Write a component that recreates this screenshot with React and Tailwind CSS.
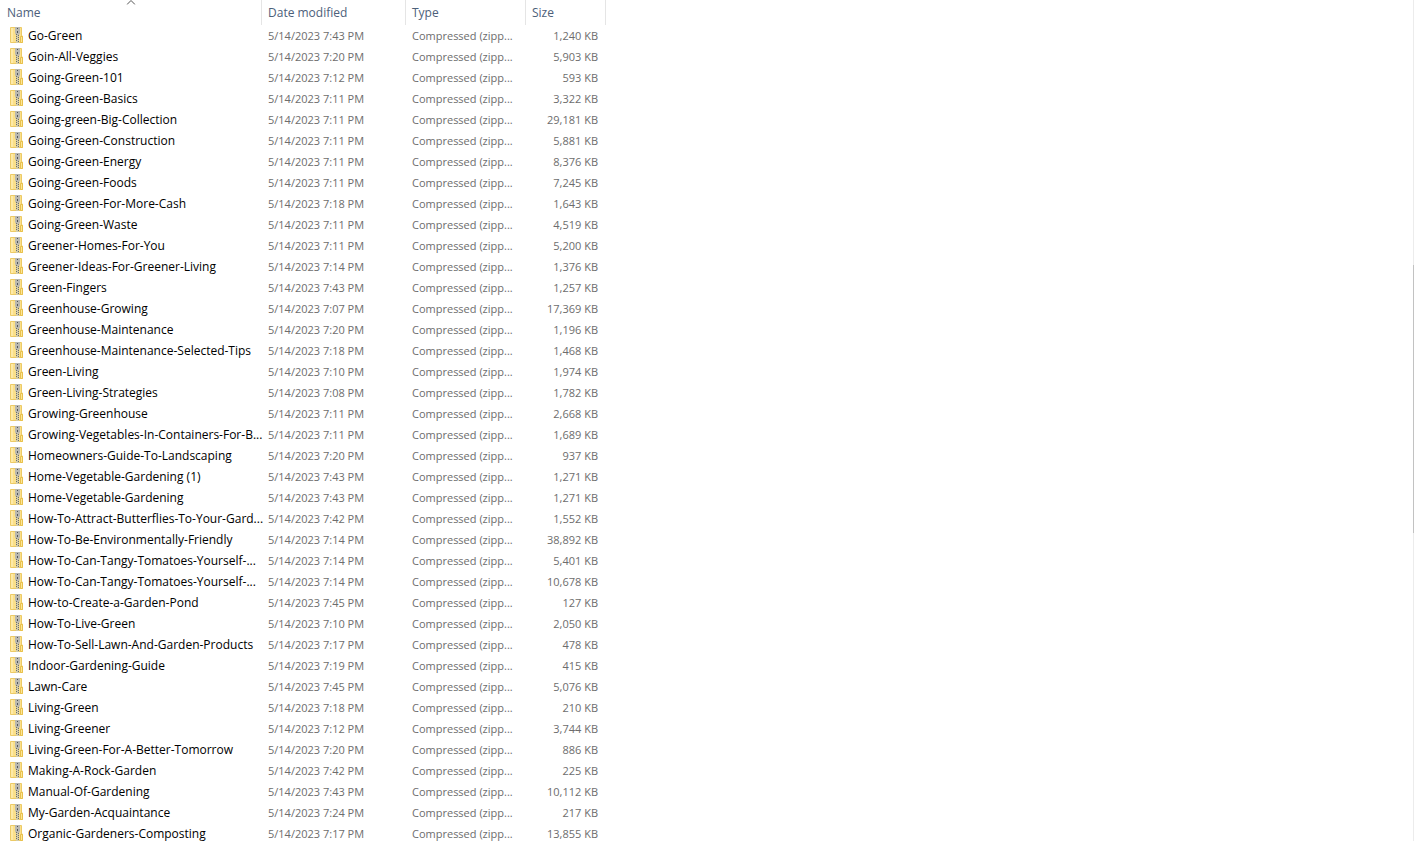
import { useState } from 'react';

const files = [
    { name: 'Go-Green', modified: '5/14/2023 7:43 PM', size: '1,240 KB' },
    { name: 'Goin-All-Veggies', modified: '5/14/2023 7:20 PM', size: '5,903 KB' },
    { name: 'Going-Green-101', modified: '5/14/2023 7:12 PM', size: '593 KB' },
    { name: 'Going-Green-Basics', modified: '5/14/2023 7:11 PM', size: '3,322 KB' },
    { name: 'Going-green-Big-Collection', modified: '5/14/2023 7:11 PM', size: '29,181 KB' },
    { name: 'Going-Green-Construction', modified: '5/14/2023 7:11 PM', size: '5,881 KB' },
    { name: 'Going-Green-Energy', modified: '5/14/2023 7:11 PM', size: '8,376 KB' },
    { name: 'Going-Green-Foods', modified: '5/14/2023 7:11 PM', size: '7,245 KB' },
    { name: 'Going-Green-For-More-Cash', modified: '5/14/2023 7:18 PM', size: '1,643 KB' },
    { name: 'Going-Green-Waste', modified: '5/14/2023 7:11 PM', size: '4,519 KB' },
    { name: 'Greener-Homes-For-You', modified: '5/14/2023 7:11 PM', size: '5,200 KB' },
    { name: 'Greener-Ideas-For-Greener-Living', modified: '5/14/2023 7:14 PM', size: '1,376 KB' },
    { name: 'Green-Fingers', modified: '5/14/2023 7:43 PM', size: '1,257 KB' },
    { name: 'Greenhouse-Growing', modified: '5/14/2023 7:07 PM', size: '17,369 KB' },
    { name: 'Greenhouse-Maintenance', modified: '5/14/2023 7:20 PM', size: '1,196 KB' },
    { name: 'Greenhouse-Maintenance-Selected-Tips', modified: '5/14/2023 7:18 PM', size: '1,468 KB' },
    { name: 'Green-Living', modified: '5/14/2023 7:10 PM', size: '1,974 KB' },
    { name: 'Green-Living-Strategies', modified: '5/14/2023 7:08 PM', size: '1,782 KB' },
    { name: 'Growing-Greenhouse', modified: '5/14/2023 7:11 PM', size: '2,668 KB' },
    { name: 'Growing-Vegetables-In-Containers-For-B...', modified: '5/14/2023 7:11 PM', size: '1,689 KB' },
    { name: 'Homeowners-Guide-To-Landscaping', modified: '5/14/2023 7:20 PM', size: '937 KB' },
    { name: 'Home-Vegetable-Gardening (1)', modified: '5/14/2023 7:43 PM', size: '1,271 KB' },
    { name: 'Home-Vegetable-Gardening', modified: '5/14/2023 7:43 PM', size: '1,271 KB' },
    { name: 'How-To-Attract-Butterflies-To-Your-Gard...', modified: '5/14/2023 7:42 PM', size: '1,552 KB' },
    { name: 'How-To-Be-Environmentally-Friendly', modified: '5/14/2023 7:14 PM', size: '38,892 KB' },
    { name: 'How-To-Can-Tangy-Tomatoes-Yourself-...', modified: '5/14/2023 7:14 PM', size: '5,401 KB' },
    { name: 'How-To-Can-Tangy-Tomatoes-Yourself-...', modified: '5/14/2023 7:14 PM', size: '10,678 KB' },
    { name: 'How-to-Create-a-Garden-Pond', modified: '5/14/2023 7:45 PM', size: '127 KB' },
    { name: 'How-To-Live-Green', modified: '5/14/2023 7:10 PM', size: '2,050 KB' },
    { name: 'How-To-Sell-Lawn-And-Garden-Products', modified: '5/14/2023 7:17 PM', size: '478 KB' },
    { name: 'Indoor-Gardening-Guide', modified: '5/14/2023 7:19 PM', size: '415 KB' },
    { name: 'Lawn-Care', modified: '5/14/2023 7:45 PM', size: '5,076 KB' },
    { name: 'Living-Green', modified: '5/14/2023 7:18 PM', size: '210 KB' },
    { name: 'Living-Greener', modified: '5/14/2023 7:12 PM', size: '3,744 KB' },
    { name: 'Living-Green-For-A-Better-Tomorrow', modified: '5/14/2023 7:20 PM', size: '886 KB' },
    { name: 'Making-A-Rock-Garden', modified: '5/14/2023 7:42 PM', size: '225 KB' },
    { name: 'Manual-Of-Gardening', modified: '5/14/2023 7:43 PM', size: '10,112 KB' },
    { name: 'My-Garden-Acquaintance', modified: '5/14/2023 7:24 PM', size: '217 KB' },
    { name: 'Organic-Gardeners-Composting', modified: '5/14/2023 7:17 PM', size: '13,855 KB' },
];

const columns = [
    { label: 'Name', width: 'w-[262px]', padding: 'pl-[7px]' },
    { label: 'Date modified', width: 'w-36', padding: 'pl-1.5' },
    { label: 'Type', width: 'w-[120px]', padding: 'pl-1.5' },
    { label: 'Size', width: 'w-20', padding: 'pl-1.5' },
];

const ZipIcon = () => (
    <svg className="w-[13px] h-4 mb-px shrink-0" viewBox="0 0 13 16" aria-hidden="true">
        <path d="M0.5 0.5H11.5V9H12.5V15.5H0.5Z" fill="#fbe08a" stroke="#ecca66" />
        <path d="M1 1H3V15H1Z" fill="#fdeaa8" />
        <path d="M10.5 9.5H12.5V15.5H10.5Z" fill="#fde694" stroke="#e8c04d" />
        <path d="M5 0H10V6L9 8H6L5 6Z" fill="#b9b8b0" />
        <path d="M6 8H9V16H6Z" fill="#d3cba6" />
        <path d="M7 1H8V2H7ZM7 4H8V6H7Z" fill="#4f5358" />
        <path
            d="M6 7H7V8H6ZM8 8H9V9H8ZM6 9H7V10H6ZM8 10H9V11H8ZM6 11H7V12H6ZM8 12H9V13H8ZM6 13H7V14H6ZM8 14H9V15H8Z"
            fill="#6c6f70"
        />
    </svg>
);

const SortArrow = ({ descending }) => (
    <svg
        className={`absolute top-0 left-1/2 -translate-x-1/2 w-[9px] h-[5px] ${descending ? 'rotate-180' : ''}`}
        viewBox="0 0 9 5"
        aria-hidden="true"
    >
        <path d="M0.5 4.5L4.5 0.5L8.5 4.5" fill="none" stroke="#555555" />
    </svg>
);

const FileTable = () => {
    const [descending, setDescending] = useState(false);
    const rows = descending ? [...files].reverse() : files;

    return (
        <table className="table-fixed w-[606px] border-separate border-spacing-0 text-xs leading-4">
            <thead>
                <tr>
                    {columns.map((col) => (
                        <th
                            key={col.label}
                            className={`${col.width} h-[25px] p-0 border-r border-[#e5e5e5] font-normal text-left text-[#4c607a]`}
                        >
                            <button
                                type="button"
                                className={`relative block w-full h-[25px] text-left ${col.padding}`}
                                onClick={() => setDescending(!descending)}
                            >
                                {col.label === 'Name' && <SortArrow descending={descending} />}
                                {col.label}
                            </button>
                        </th>
                    ))}
                </tr>
            </thead>
            <tbody>
                {rows.map((file, index) => (
                    <tr key={index} className="text-[11px] leading-4 text-[#6d6d6d] whitespace-nowrap">
                        <td className="h-[21px] p-0 pl-2.5 text-xs text-black">
                            <div className="flex items-center gap-[5px]">
                                <ZipIcon />
                                <span>{file.name}</span>
                            </div>
                        </td>
                        <td className="p-0 pl-1.5">{file.modified}</td>
                        <td className="p-0 pl-1.5">Compressed (zipp...</td>
                        <td className="p-0 pr-2 text-right">{file.size}</td>
                    </tr>
                ))}
            </tbody>
        </table>
    );
};

const App = () => {
    return (
        <div className="flex justify-between min-h-screen bg-white pb-5 font-['Open_Sans','Noto_Sans',sans-serif]">
            <FileTable />

            {/* Scroll track */}
            <div className="flex flex-col w-px mb-[3px] bg-[#ececec]">
                <div className="grow-[265]" />
                <div className="grow-[268] bg-[#c2c2c2]" />
                <div className="grow-[308]" />
            </div>
        </div>
    );
};

export default App;
